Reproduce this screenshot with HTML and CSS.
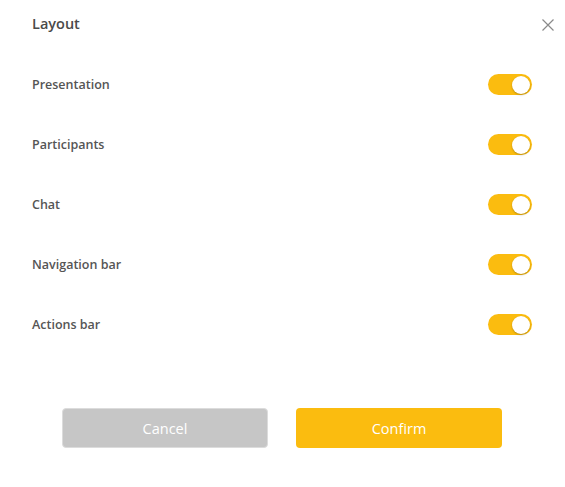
FILE: index.html
```html
<!DOCTYPE html>
<html>
<head>
<meta charset="utf-8">
<link rel="stylesheet" href="styles.css">
</head>
<body>
<div class="dialog">
  <div class="header">
    <h1 class="title">Layout</h1>
    <button class="close" aria-label="Close">
      <svg width="12" height="12" viewBox="0 0 12 12"><path d="M0.5 0.5L11.5 11.5M11.5 0.5L0.5 11.5" stroke="#8a8a8a" stroke-width="1.2" fill="none"/></svg>
    </button>
  </div>
  <ul class="list">
    <li class="row"><span class="label">Presentation</span><span class="toggle on"><span class="knob"></span></span></li>
    <li class="row"><span class="label">Participants</span><span class="toggle on"><span class="knob"></span></span></li>
    <li class="row"><span class="label">Chat</span><span class="toggle on"><span class="knob"></span></span></li>
    <li class="row"><span class="label">Navigation bar</span><span class="toggle on"><span class="knob"></span></span></li>
    <li class="row"><span class="label">Actions bar</span><span class="toggle on"><span class="knob"></span></span></li>
  </ul>
  <div class="actions">
    <button class="btn cancel">Cancel</button>
    <button class="btn confirm">Confirm</button>
  </div>
</div>
</body>
</html>
```
FILE: styles.css
```css
* { box-sizing: border-box; }
html, body { margin: 0; padding: 0; background: #fff; }
body { font-family: "Open Sans", "Noto Sans", sans-serif; color: #444; }
.dialog { width: 565px; height: 487px; padding: 14px 0 0 32px; }
.header { display: flex; align-items: center; justify-content: space-between; height: 20px; padding-right: 11px; margin-bottom: 20px; }
.title { margin: 0; font-size: 14.5px; font-weight: 600; color: #4a4a4a; line-height: 20px; }
.close { border: 0; background: none; padding: 0; width: 12px; height: 12px; display: flex; margin-top: 2px; }
.list { list-style: none; margin: 0; padding: 0 33px 0 0; }
.row { height: 60px; display: flex; align-items: center; justify-content: space-between; }
.label { font-size: 12.5px; font-weight: 600; color: #555; }
.toggle { width: 44px; height: 21px; border-radius: 11px; background: #fbbc0f; position: relative; display: block; margin-top: 1px; }
.knob { position: absolute; right: 2px; top: 1.5px; width: 18px; height: 18px; border-radius: 50%; background: #fff; box-shadow: 0 1px 2px rgba(0,0,0,0.25); }
.actions { display: flex; gap: 28px; margin: 54px 0 0 30px; }
.btn { width: 206px; height: 40px; border-radius: 4px; font-family: "Open Sans", "Noto Sans", sans-serif; font-size: 14.5px; color: #fff; cursor: pointer; }
.cancel { background: #c6c6c6; border: 1px solid #dcdcdc; }
.confirm { background: #fbbc0f; border: 0; }
```
